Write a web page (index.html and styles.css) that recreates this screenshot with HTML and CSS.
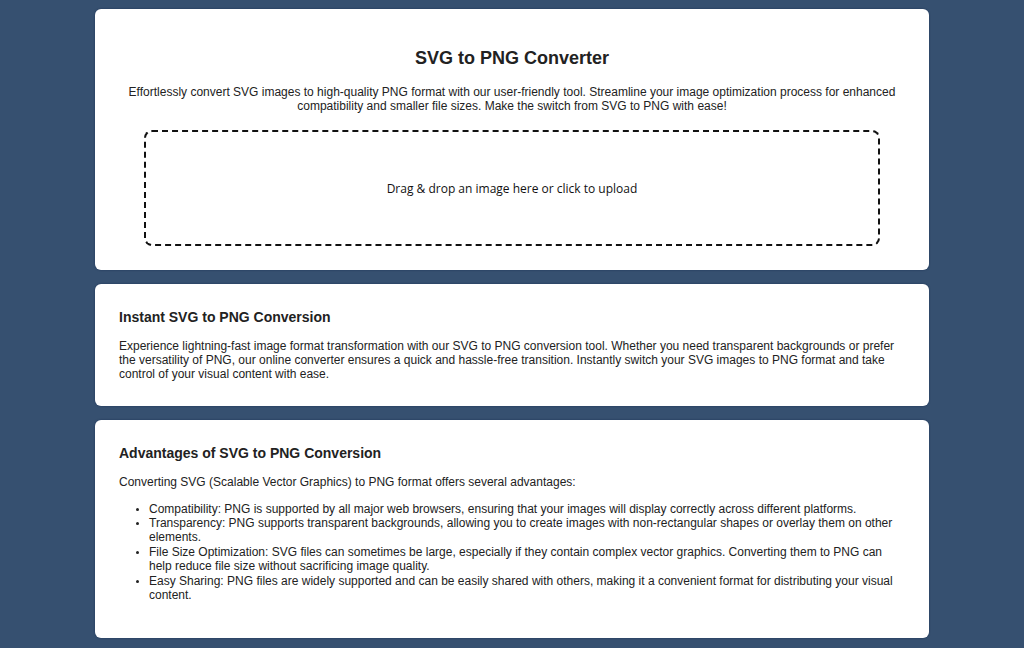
FILE: index.html
```html
<!DOCTYPE html>
<html lang="en">
<head>
<meta charset="utf-8">
<meta name="viewport" content="width=device-width, initial-scale=1">
<title>SVG to PNG Converter</title>
<link rel="stylesheet" href="styles.css">
</head>
<body>
<main class="page">
  <section class="card converter">
    <h1 class="title">SVG to PNG Converter</h1>
    <p class="text">Effortlessly convert SVG images to high-quality PNG format with our user-friendly tool. Streamline your image optimization process for enhanced compatibility and smaller file sizes. Make the switch from SVG to PNG with ease!</p>
    <button class="dropzone" type="button">Drag &amp; drop an image here or click to upload</button>
  </section>
  <section class="card">
    <h2 class="heading">Instant SVG to PNG Conversion</h2>
    <p class="text">Experience lightning-fast image format transformation with our SVG to PNG conversion tool. Whether you need transparent backgrounds or prefer the versatility of PNG, our online converter ensures a quick and hassle-free transition. Instantly switch your SVG images to PNG format and take control of your visual content with ease.</p>
  </section>
  <section class="card advantages">
    <h2 class="heading">Advantages of SVG to PNG Conversion</h2>
    <p class="text">Converting SVG (Scalable Vector Graphics) to PNG format offers several advantages:</p>
    <ul class="list">
      <li>Compatibility: PNG is supported by all major web browsers, ensuring that your images will display correctly across different platforms.</li>
      <li>Transparency: PNG supports transparent backgrounds, allowing you to create images with non-rectangular shapes or overlay them on other elements.</li>
      <li>File Size Optimization: SVG files can sometimes be large, especially if they contain complex vector graphics. Converting them to PNG can help reduce file size without sacrificing image quality.</li>
      <li>Easy Sharing: PNG files are widely supported and can be easily shared with others, making it a convenient format for distributing your visual content.</li>
    </ul>
  </section>
</main>
</body>
</html>
```
FILE: styles.css
```css
* {
  box-sizing: border-box;
}

body {
  margin: 0;
  background: #365070;
  color: #222;
  font-family: "Liberation Sans", Arial, sans-serif;
  font-size: 12px;
  line-height: 14px;
}

.page {
  display: flex;
  flex-direction: column;
  gap: 14px;
  max-width: 834px;
  margin: 0 auto;
  padding: 9px 0;
}

.card {
  padding: 24px 24px 25px;
  background: #fff;
  border-radius: 6px;
  box-shadow: 0 0 2px rgba(0, 20, 60, 0.5);
}

.converter {
  padding: 36px 24px 24px;
  text-align: center;
}

.title {
  margin: 0;
  padding-bottom: 14px;
  font-size: 18px;
  line-height: 26px;
}

.heading {
  margin: 0 0 13px;
  font-size: 14px;
  line-height: 18px;
}

.text {
  margin: 0;
}

.dropzone {
  display: block;
  width: calc(100% - 50px);
  height: 116px;
  margin: 17px auto 0;
  border: 2px dashed #111;
  border-radius: 8px;
  background: transparent;
  color: #111;
  font: 12px "Open Sans", "Noto Sans", sans-serif;
  cursor: pointer;
}

.advantages {
  padding-bottom: 36px;
}

.list {
  display: flow-root;
  margin: 13px 0 0;
  padding-left: 30px;
}

.list li:nth-child(n + 3) {
  margin-top: 1px;
}

.list li::marker {
  font-size: 10px;
}
```
